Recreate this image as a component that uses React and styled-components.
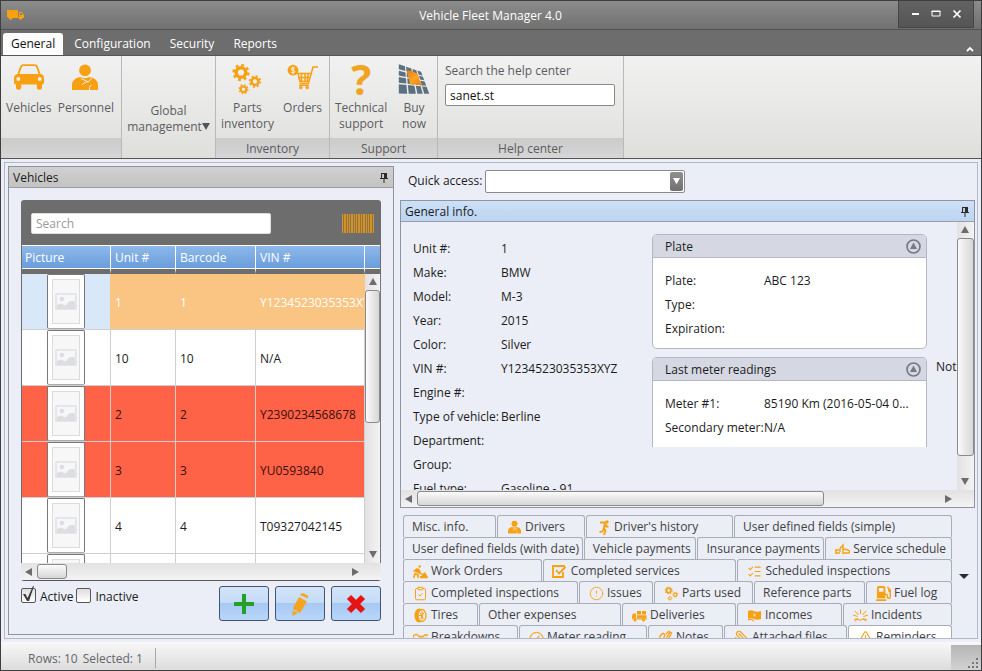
import React, { useState } from "react";
import styled, { createGlobalStyle, css } from "styled-components";
import {
  CircleAlert,
  ClipboardCheck,
  Gauge,
  ListChecks,
  Paperclip,
  TriangleAlert,
} from "lucide-react";
import { FaGasPump } from "react-icons/fa";
import { FaPersonDigging } from "react-icons/fa6";

const orange = "#f7a112";

const vehicles = [
  { unit: "1", barcode: "1", vin: "Y1234523035353XYZ", state: "selected" },
  { unit: "10", barcode: "10", vin: "N/A" },
  { unit: "2", barcode: "2", vin: "Y2390234568678", state: "alert" },
  { unit: "3", barcode: "3", vin: "YU0593840", state: "alert" },
  { unit: "4", barcode: "4", vin: "T09327042145" },
  { unit: "", barcode: "", vin: "" },
];

const generalInfo = [
  ["Unit #:", "1"],
  ["Make:", "BMW"],
  ["Model:", "M-3"],
  ["Year:", "2015"],
  ["Color:", "Silver"],
  ["VIN #:", "Y1234523035353XYZ"],
  ["Engine #:", ""],
  ["Type of vehicle:", "Berline"],
  ["Department:", ""],
  ["Group:", ""],
  ["Fuel type:", "Gasoline - 91"],
];

const plateInfo = [
  ["Plate:", "ABC 123"],
  ["Type:", ""],
  ["Expiration:", ""],
];

const meterInfo = [
  ["Meter #1:", "85190 Km (2016-05-04 0..."],
  ["Secondary meter:", "N/A"],
];

// size = share of the row that the tab takes
const tabRows = [
  [
    { label: "Misc. info.", size: 93 },
    { label: "Drivers", size: 88, icon: "person" },
    { label: "Driver's history", size: 147, icon: "runner" },
    { label: "User defined fields (simple)", size: 218 },
  ],
  [
    { label: "User defined fields (with date)", size: 180 },
    { label: "Vehicle payments", size: 113 },
    { label: "Insurance payments", size: 127 },
    { label: "Service schedule", size: 127, icon: "service" },
  ],
  [
    { label: "Work Orders", size: 139, icon: "digging" },
    { label: "Completed services", size: 194, icon: "checkbox" },
    { label: "Scheduled inspections", size: 215, icon: "list" },
  ],
  [
    { label: "Completed inspections", size: 175, icon: "clipboard" },
    { label: "Issues", size: 74, icon: "alert" },
    { label: "Parts used", size: 99, icon: "gears" },
    { label: "Reference parts", size: 111 },
    { label: "Fuel log", size: 86, icon: "fuel" },
  ],
  [
    { label: "Tires", size: 75, icon: "tire" },
    { label: "Other expenses", size: 142 },
    { label: "Deliveries", size: 114, icon: "delivery" },
    { label: "Incomes", size: 105, icon: "income" },
    { label: "Incidents", size: 109, icon: "burst" },
  ],
  [
    { label: "Breakdowns", size: 115, icon: "wrench" },
    { label: "Meter reading", size: 128, icon: "gauge" },
    { label: "Notes", size: 75, icon: "note" },
    { label: "Attached files", size: 123, icon: "clip" },
    { label: "Reminders", size: 104, icon: "warning" },
  ],
];

/* ---------- icons ---------- */

const TruckIcon = () => (
  <svg width="17" height="12" viewBox="0 0 17 12" fill={orange} aria-hidden="true">
    <path d="M0 1h11v7H0z" />
    <path d="M12 3h3l2 3v3h-5z" />
    <path d="M1 8h15v1H1z" />
    <circle cx="3.6" cy="9.3" r="1.5" />
    <circle cx="13.6" cy="9.3" r="1.5" />
    <path d="M13 4h1.5l1 2H13z" fill="#7b7b7b" />
  </svg>
);

const CarIcon = () => (
  <svg width="32" height="32" viewBox="0 0 32 32" aria-hidden="true">
    <path
      d="M5 12 8 3.7Q8.7 2.100 10.500 2.100H21.500Q23.300 2.100 24 3.700L27 12"
      fill="none"
      stroke={orange}
      strokeWidth="1.800"
    />
    <path
      d="M4.500 11h23q3.500.6 3.500 4v4.800q0 1.700-1.600 1.700H29v3.200q0 2-2.300 2h-.6q-2.300 0-2.300-2v-3.200H8.200v3.200q0 2-2.300 2h-.6q-2.300 0-2.300-2v-3.200h-.4Q1 21.500 1 19.800V15q0-3.400 3.500-4z"
      fill={orange}
    />
    <circle cx="5.300" cy="16" r="1.900" fill="#ececec" />
    <circle cx="26.700" cy="16" r="1.900" fill="#ececec" />
  </svg>
);

const PersonShape = ({ line = "#ececec" }) => (
  <>
    <circle cx="15" cy="7.400" r="5.900" fill={orange} />
    <path d="M2 27v-5.500q.5-6 8-7.500l5 1.200 5-1.200q7.500 1.500 8 7.500V27z" fill={orange} />
    <path
      d="M11 15.500 18.500 19M21.500 14.800q-1.500 4.500-6.500 4.500l-3 2.500M19.500 27v-2.500q0-2 2-2"
      fill="none"
      stroke={line}
      strokeWidth="1"
    />
  </>
);

const PersonIcon = () => (
  <svg width="32" height="32" viewBox="0 0 32 32" aria-hidden="true">
    <PersonShape />
  </svg>
);

const Gear = ({ x, y, r }) => {
  const tooth = (2 * Math.PI * r * 0.86) / 16;
  return (
    <g fill="none" stroke={orange}>
      <circle cx={x} cy={y} r={r * 0.56} strokeWidth={r * 0.4} />
      <circle cx={x} cy={y} r={r * 0.86} strokeWidth={r * 0.28} strokeDasharray={tooth} />
    </g>
  );
};

const GearsShape = () => (
  <>
    <Gear x={10} y={9.5} r={8.6} />
    <Gear x={24} y={18.5} r={6.2} />
    <Gear x={12.5} y={26.2} r={5} />
  </>
);

const GearsIcon = () => (
  <svg width="32" height="32" viewBox="0 0 32 32" aria-hidden="true">
    <GearsShape />
  </svg>
);

const CartIcon = () => (
  <svg width="32" height="32" viewBox="0 0 32 32" fill="none" stroke={orange} aria-hidden="true">
    <circle cx="6" cy="7.200" r="5.400" fill={orange} stroke="none" />
    <path
      d="M7.900 5.300Q4.200 4 4.200 5.900q0 1.200 2 1.400 2 .3 1.700 1.700-.8 1.500-3.900.2M6 3.300v8"
      stroke="#efefef"
      strokeWidth="1"
    />
    <path d="M31 4h-5l-4.600 16.500" strokeWidth="1.500" />
    <path
      d="M10 10.500h13.800M11 14.500h11.500M12 18.500h9.500M11 10.500l2 8M14.500 10v9M18 10v9M21.300 10l-1 9"
      strokeWidth="1.500"
    />
    <path d="M22 20.700H12.500" strokeWidth="1.600" />
    <path d="M12 22.500h10" strokeWidth="1.200" />
    <circle cx="13.800" cy="24.600" r="1.700" fill={orange} stroke="none" />
    <circle cx="20.200" cy="24.600" r="1.700" fill={orange} stroke="none" />
  </svg>
);

const SolarIcon = () => {
  const at = (u, v) => {
    const left = [0.8, 1.2 + v * 30];
    const right = [23.5 + v * 8.5, 9 + v * 22.2];
    return [
      left[0] + (right[0] - left[0]) * u,
      left[1] + (right[1] - left[1]) * u,
    ].join(",");
  };
  const cols = [0, 0.32, 0.6, 0.82, 1.03];
  const rows = [0, 0.22, 0.43, 0.67, 1.03];
  const cells = [];
  for (let c = 0; c < 4; c++) {
    for (let r = 0; r < 4; r++) {
      const [u1, u2] = [cols[c], cols[c + 1] - 0.05];
      const [v1, v2] = [rows[r], rows[r + 1] - 0.05];
      cells.push([at(u1, v1), at(u2, v1), at(u2, v2), at(u1, v2)].join(" "));
    }
  }
  return (
    <svg width="32" height="32" viewBox="0 0 32 32" aria-hidden="true">
      <defs>
        <linearGradient id="glow" x1="0" y1="0" x2="1" y2="1">
          <stop offset="0" stopColor="#e8791a" />
          <stop offset="0.5" stopColor="#fba51d" />
          <stop offset="1" stopColor="#e57b22" />
        </linearGradient>
      </defs>
      {cells.map((points) => (
        <polygon key={points} points={points} fill="#5b717f" />
      ))}
      <path d="m8.500 7.500 5.500.5 6 3 1.500 6L25 23l-6-1.500h-7l-.8-4.500z" fill="url(#glow)" />
    </svg>
  );
};

const bars = [
  [0, 1], [2, 2], [5, 1], [7, 1], [9, 2], [12, 1], [14, 1], [16, 2],
  [19, 1], [21, 2], [24, 1], [26, 1], [28, 2], [31, 1],
];

const BarcodeIcon = () => (
  <svg width="32" height="19" viewBox="0 0 32 19" aria-hidden="true">
    <rect width="32" height="19" fill="#94733e" />
    {bars.map(([x, w]) => (
      <rect key={x} x={x} width={w} height="19" fill="#cf922d" />
    ))}
  </svg>
);

const PinIcon = () => (
  <svg width="8" height="10" viewBox="0 0 8 10" aria-hidden="true">
    <path d="M1 0h6v5h1v1H0V5h1zM3.500 6h1v4h-1z" fill="#2b2b2f" />
    <path d="M2 1h2v4H2z" fill="#c4cad2" />
  </svg>
);

const PictureIcon = () => (
  <svg width="22" height="17" viewBox="0 0 22 17" aria-hidden="true">
    <rect x="1" y="1" width="20" height="15" fill="#f6f7f8" stroke="#dfe1e3" strokeWidth="1.500" />
    <circle cx="7" cy="6" r="2.300" fill="#dcdee1" />
    <path d="M2 12q4-3 7 0 2 1 4-2.500 2-3 7-1V16H2z" fill="#dcdee1" />
  </svg>
);

const PlusIcon = () => (
  <svg width="20" height="20" viewBox="0 0 20 20" aria-hidden="true">
    <path d="M8 0h4v8h8v4h-8v8H8v-8H0V8h8z" fill="#23a127" />
  </svg>
);

const PencilIcon = () => (
  <svg width="20" height="24" viewBox="0 0 20 24" fill="#f5a51d" aria-hidden="true">
    <path d="M10 3q1-2.500 4-1.500l3 1.700q2 1.300 1 3.300z" />
    <path d="m9 5 8 4.500-7 11.500-2.500-1-1-1.500-2.500-.5-1-2z" />
    <path d="m2.300 17.500 1.200 2 2.500.3 1.500 1.700L2.500 24z" />
  </svg>
);

const CrossIcon = () => (
  <svg width="20" height="20" viewBox="0 0 20 20" aria-hidden="true">
    <path d="m3 3 14 14M17 3 3 17" stroke="#e81313" strokeWidth="6" />
  </svg>
);

const TickIcon = () => (
  <Tick width="15" height="17" viewBox="0 0 15 17" aria-hidden="true">
    <path d="M2 8h2.500l2 4L12 0h1L8 15H6z" fill="#3d3d3d" />
  </Tick>
);

const stroke = { fill: "none", stroke: orange, strokeWidth: 1.3 };

const smallIcons = {
  person: (
    <svg viewBox="0 0 30 30">
      <PersonShape line="#ebeef5" />
    </svg>
  ),
  runner: (
    <svg viewBox="0 0 15 15">
      <circle cx="11" cy="2" r="1.700" fill={orange} />
      <path
        d="M4 2.500h5l-1 6 1.500 2-1.500 4.500M8 8l-1.500 3.500L3.500 12M9.500 4.500l1 2h2"
        {...stroke}
        strokeWidth="1.900"
      />
    </svg>
  ),
  service: (
    <svg viewBox="0 0 15 15">
      <path
        d="M0 8h4M0 11H5M8 11h6.500M5 10V6.500L8 3v9M8 7q4 0 6.500 2v2M1 8v3"
        {...stroke}
        strokeWidth="1.400"
      />
    </svg>
  ),
  digging: <FaPersonDigging color={orange} />,
  checkbox: (
    <svg viewBox="0 0 15 15">
      <path d="M11 8v5H1V2h12M4 6l3 3.500L13.500 3" {...stroke} strokeWidth="1.800" />
    </svg>
  ),
  list: <ListChecks color={orange} strokeWidth={1.7} />,
  clipboard: <ClipboardCheck color={orange} strokeWidth={1.6} />,
  alert: <CircleAlert color={orange} strokeWidth={1.4} />,
  gears: (
    <svg viewBox="0 0 32 32">
      <GearsShape />
    </svg>
  ),
  fuel: <FaGasPump color={orange} />,
  tire: (
    <svg viewBox="0 0 15 15">
      <ellipse cx="6" cy="7.500" rx="4.500" ry="7" fill={orange} />
      <ellipse cx="9" cy="7.500" rx="4" ry="6" fill="#ebeef5" stroke={orange} strokeWidth="1.300" />
      <path d="M9 3v9M6 7.500h3M7 4.500l3.500 6M11 4.500l-3.500 6" stroke={orange} />
    </svg>
  ),
  delivery: (
    <svg viewBox="0 0 15 15">
      <path
        d="M5 3h4v3.500H5zM10 3h4v3.500h-4zM5 7.200h9.500v3H5zM1 5.500h3v4.700H0V8zM0 10.500h15v1H0z"
        fill={orange}
      />
      <circle cx="3" cy="12" r="1.500" fill={orange} />
      <circle cx="11.500" cy="12" r="1.500" fill={orange} />
    </svg>
  ),
  income: (
    <svg viewBox="0 0 15 15">
      <path d="M1 3q3-1.500 6 0t7 0v8q-4 1.500-7 0t-6 0z" fill={orange} />
      <path d="M1 12q3-1.500 6 1" {...stroke} />
      <circle cx="7.500" cy="7" r="1.500" fill="#fbd58f" />
    </svg>
  ),
  burst: (
    <svg viewBox="0 0 15 15">
      <path
        d="M7.500 6V1.500M5.500 7 2 3M9.500 7 13 3M4.500 8.500 0 7M10.500 8.500 15 7M1 12q2-2 4-.5t4 0 5 .5M5 10l-3 3.500M10 10l3 3.500"
        {...stroke}
        strokeWidth="1"
      />
    </svg>
  ),
  wrench: (
    <svg viewBox="0 0 15 15">
      <path d="M0 7q1-3 4-2.500L6 6.500h4l2-1.500h3M0 7.500l2 2h3L6.500 8.500H15" {...stroke} />
    </svg>
  ),
  gauge: <Gauge color={orange} strokeWidth={1.7} />,
  note: (
    <svg viewBox="0 0 15 15">
      <path d="M2 13V6l3-3M5 3l2 2-3 7M8 9l4-7 1.500 1L10 10M8 4l3-3" {...stroke} />
    </svg>
  ),
  clip: <FlippedClip color={orange} strokeWidth={1.8} />,
  warning: <TriangleAlert color={orange} strokeWidth={1.8} />,
};

function FlippedClip(props) {
  return (
    <Flip>
      <Paperclip {...props} />
    </Flip>
  );
}

const arrowPaths = {
  up: "M4 0 8 7H0z",
  down: "M0 0h8L4 7z",
  left: "M7 0v8L0 4z",
  right: "M0 0v8l7-4z",
};

const Arrow = ({ dir, color = "#6b6b70" }) => (
  <svg width="8" height="8" viewBox="0 0 8 8" aria-hidden="true">
    <path d={arrowPaths[dir]} fill={color} />
  </svg>
);

/* ---------- components ---------- */

const VerticalScroll = ({ thumb, after }) => (
  <VTrack>
    <ScrollButton aria-label="Scroll up">
      <Arrow dir="up" />
    </ScrollButton>
    <VThumb $grow={thumb} />
    <Space $grow={after} />
    <ScrollButton aria-label="Scroll down">
      <Arrow dir="down" />
    </ScrollButton>
  </VTrack>
);

const HorizontalScroll = ({ thumb, after }) => (
  <HTrack>
    <ScrollButton aria-label="Scroll left">
      <Arrow dir="left" />
    </ScrollButton>
    <HThumb $grow={thumb} />
    <Space $grow={after} />
    <ScrollButton aria-label="Scroll right">
      <Arrow dir="right" />
    </ScrollButton>
  </HTrack>
);

const Details = ({ items, labelWidth }) => (
  <DetailList $label={labelWidth}>
    {items.map(([label, value]) => (
      <React.Fragment key={label}>
        <dt>{label}</dt>
        <dd>{value}</dd>
      </React.Fragment>
    ))}
  </DetailList>
);

const RibbonItem = ({ icon, children }) => (
  <RibbonButton>
    <IconBox>{icon}</IconBox>
    <span>{children}</span>
  </RibbonButton>
);

const InfoCard = ({ title, items, open }) => (
  <Card $open={open}>
    <CardHeader>
      {title}
      <PlainButton aria-label={`Collapse ${title}`}>
        <svg width="15" height="15" viewBox="0 0 15 15">
          <circle cx="7.500" cy="7.500" r="6.500" fill="none" stroke="#777985" strokeWidth="1.700" />
          <path d="M7.500 3.500 11 10H4z" fill="#777985" />
        </svg>
      </PlainButton>
    </CardHeader>
    <CardBody>
      <Details items={items} labelWidth={99} />
    </CardBody>
  </Card>
);

const VehiclesPanel = () => {
  const [active, setActive] = useState(true);
  const [inactive, setInactive] = useState(false);

  return (
    <Panel>
      <PanelHeader>
        Vehicles
        <PlainButton aria-label="Pin vehicles">
          <PinIcon />
        </PlainButton>
      </PanelHeader>
      <PanelContent>
        <SearchBar>
          <SearchInput placeholder="Search" aria-label="Search vehicles" />
          <PlainButton aria-label="Scan barcode">
            <BarcodeIcon />
          </PlainButton>
        </SearchBar>
        <GridBox>
          <TableClip>
            <Table>
              <colgroup>
                <Col $width={89} />
                <Col $width={65} />
                <Col $width={80} />
                <col />
                <Col $width={15} />
              </colgroup>
              <thead>
                <tr>
                  <Th>Picture</Th>
                  <Th>Unit #</Th>
                  <Th>Barcode</Th>
                  <Th>VIN #</Th>
                  <Th aria-hidden="true" />
                </tr>
              </thead>
              <tbody>
                {vehicles.map((v, i) => (
                  <Row key={i} $state={v.state}>
                    <td>
                      <Thumbnail>
                        <div>
                          <PictureIcon />
                        </div>
                      </Thumbnail>
                    </td>
                    <td>{v.unit}</td>
                    <td>{v.barcode}</td>
                    <td>{v.vin}</td>
                    <td />
                  </Row>
                ))}
              </tbody>
            </Table>
          </TableClip>
          <VerticalScroll thumb={132} after={124} />
          <HorizontalScroll thumb={28} after={284} />
        </GridBox>
        <PanelFooter>
          <Check>
            <CheckBox>
              <input type="checkbox" checked={active} onChange={() => setActive(!active)} />
              {active && <TickIcon />}
            </CheckBox>
            Active
          </Check>
          <Check>
            <CheckBox>
              <input type="checkbox" checked={inactive} onChange={() => setInactive(!inactive)} />
              {inactive && <TickIcon />}
            </CheckBox>
            Inactive
          </Check>
          <Actions>
            <ActionButton aria-label="Add vehicle">
              <PlusIcon />
            </ActionButton>
            <ActionButton aria-label="Edit vehicle">
              <PencilIcon />
            </ActionButton>
            <ActionButton aria-label="Delete vehicle">
              <CrossIcon />
            </ActionButton>
          </Actions>
        </PanelFooter>
      </PanelContent>
    </Panel>
  );
};

const App = () => {
  const [help, setHelp] = useState("sanet.st");
  const [tab, setTab] = useState("Reminders");

  return (
    <>
      <GlobalStyle />
      <Window>
        <TitleBar>
          <TruckIcon />
          <Title>Vehicle Fleet Manager 4.0</Title>
          <WindowButtons>
            <PlainButton aria-label="Minimize">
              <svg width="10" height="10" viewBox="0 0 10 10">
                <path d="M2 4h7v2H2z" fill="#fff" />
              </svg>
            </PlainButton>
            <PlainButton aria-label="Maximize">
              <svg width="10" height="10" viewBox="0 0 10 10">
                <path d="M1 2h8v5H1zM.5 2.500h9" fill="none" stroke="#fff" />
              </svg>
            </PlainButton>
            <PlainButton aria-label="Close">
              <svg width="10" height="10" viewBox="0 0 10 10">
                <path d="m1.500 1.500 7 7m0-7-7 7" stroke="#fff" strokeWidth="1.700" />
              </svg>
            </PlainButton>
          </WindowButtons>
        </TitleBar>

        <MenuBar>
          <MenuTab $active>General</MenuTab>
          <MenuTab>Configuration</MenuTab>
          <MenuTab>Security</MenuTab>
          <MenuTab>Reports</MenuTab>
          <RibbonToggle aria-label="Collapse ribbon">
            <svg width="8" height="6" viewBox="0 0 8 6">
              <path d="m1 5 3-3 3 3" fill="none" stroke="#fff" strokeWidth="1.800" />
            </svg>
          </RibbonToggle>
        </MenuBar>

        <Ribbon>
          <Group $width={121}>
            <GroupItems>
              <RibbonItem icon={<CarIcon />}>Vehicles</RibbonItem>
              <RibbonItem icon={<PersonIcon />}>Personnel</RibbonItem>
            </GroupItems>
            <GroupLabel />
          </Group>
          <Group $width={94}>
            <GlobalButton>
              Global
              <br />
              management
              <Arrow dir="down" color="#555" />
            </GlobalButton>
          </Group>
          <Group $width={114}>
            <GroupItems>
              <RibbonItem icon={<GearsIcon />}>
                Parts
                <br />
                inventory
              </RibbonItem>
              <RibbonItem icon={<CartIcon />}>Orders</RibbonItem>
            </GroupItems>
            <GroupLabel>Inventory</GroupLabel>
          </Group>
          <Group $width={108}>
            <GroupItems>
              <RibbonItem icon={<QuestionMark>?</QuestionMark>}>
                Technical
                <br />
                support
              </RibbonItem>
              <RibbonItem icon={<SolarIcon />}>
                Buy
                <br />
                now
              </RibbonItem>
            </GroupItems>
            <GroupLabel>Support</GroupLabel>
          </Group>
          <Group $width={186}>
            <HelpSearch>
              <label htmlFor="help">Search the help center</label>
              <HelpInput id="help" value={help} onChange={(e) => setHelp(e.target.value)} />
            </HelpSearch>
            <GroupLabel>Help center</GroupLabel>
          </Group>
        </Ribbon>

        <Body>
          <Workspace>
            <VehiclesPanel />
            <Main>
              <QuickAccess>
                <label htmlFor="quick">Quick access:</label>
                <SelectBox>
                  <select id="quick" />
                  <SelectArrow>
                    <Arrow dir="down" color="#fff" />
                  </SelectArrow>
                </SelectBox>
              </QuickAccess>
              <InfoPanel>
                <PanelHeader $blue>
                  General info.
                  <PlainButton aria-label="Pin general info">
                    <PinIcon />
                  </PlainButton>
                </PanelHeader>
                <InfoGrid>
                  <InfoClip>
                    <InfoContent>
                      <Details items={generalInfo} labelWidth={88} />
                      <Cards>
                        <InfoCard title="Plate" items={plateInfo} />
                        <InfoCard title="Last meter readings" items={meterInfo} open />
                      </Cards>
                      <Notes>Not</Notes>
                    </InfoContent>
                  </InfoClip>
                  <VerticalScroll thumb={216} after={18} />
                  <HorizontalScroll thumb={405} after={117} />
                </InfoGrid>
              </InfoPanel>
              <TabArea>
                <TabRows>
                  {tabRows.map((row, i) => (
                    <TabRow key={i} $sizes={row.map((t) => t.size)}>
                      {row.map((t) => (
                        <Tab
                          key={t.label}
                          $active={t.label === tab}
                          onClick={() => setTab(t.label)}
                        >
                          {t.icon && <TabIcon>{smallIcons[t.icon]}</TabIcon>}
                          {t.label}
                        </Tab>
                      ))}
                    </TabRow>
                  ))}
                </TabRows>
                <MoreButton aria-label="More tabs">
                  <svg width="10" height="5" viewBox="0 0 10 5">
                    <path d="M0 0h10L5 5z" fill="#2b2b2f" />
                  </svg>
                </MoreButton>
              </TabArea>
            </Main>
          </Workspace>
        </Body>

        <StatusBar>
          <StatusText>
            <span>Rows: 10</span>
            <span>Selected: 1</span>
          </StatusText>
          <Grip>
            <svg width="11" height="11" viewBox="0 0 11 11" fill="#77777b">
              <path d="M8 0h2v2H8zM4 4h2v2H4zM8 4h2v2H8zM0 8h2v2H0zM4 8h2v2H4zM8 8h2v2H8z" />
            </svg>
          </Grip>
        </StatusBar>
      </Window>
    </>
  );
};

/* ---------- styles ---------- */

const GlobalStyle = createGlobalStyle`
  * {
    box-sizing: border-box;
  }
  body {
    margin: 0;
    color: #1c1c20;
    font: 12px/16px "Open Sans", "Noto Sans", sans-serif;
  }
  button, input, select {
    font: inherit;
    color: inherit;
  }
  button {
    border: none;
    padding: 0;
    background: none;
  }
  svg {
    flex: none;
    display: block;
  }
`;

const Window = styled.div`
  display: flex;
  flex-direction: column;
  height: 100vh;
  border: 1px solid #403d40;
  background: #ebeef6;
  overflow: hidden;
`;

const PlainButton = styled.button`
  display: flex;
  align-items: center;
`;

const Tick = styled.svg`
  grid-area: 1 / 1;
  align-self: end;
  pointer-events: none;
`;

const Flip = styled.span`
  transform: scaleX(-1);
`;

const TitleBar = styled.header`
  display: grid;
  grid-template-columns: 1fr auto 1fr;
  align-items: center;
  flex: none;
  height: 29px;
  padding: 0 7px 0 6px;
  border-bottom: 1px solid #515151;
  background: linear-gradient(#8c8c8c, #707070);
`;

const Title = styled.h1`
  margin: 0;
  padding-top: 2px;
  font-size: 12px;
  font-weight: 400;
  color: #fff;
`;

const WindowButtons = styled.div`
  display: flex;
  justify-content: space-evenly;
  align-items: center;
  justify-self: end;
  align-self: start;
  width: 76px;
  height: 27px;
  border: 1px solid #444;
  border-top: none;
  background: linear-gradient(#626262, #555);
`;

const MenuBar = styled.nav`
  display: flex;
  align-items: flex-end;
  flex: none;
  gap: 3px;
  height: 25px;
  padding-left: 2px;
  background: #6d6d6d;
`;

const MenuTab = styled.button`
  height: 22px;
  padding: 0 8px;
  border-radius: 3px 3px 0 0;
  color: #fff;
  ${(p) =>
    p.$active &&
    css`
      background: #fcfcfc;
      color: #111;
    `}
`;

const RibbonToggle = styled(PlainButton)`
  margin: 0 7px 3px auto;
`;

const Ribbon = styled.div`
  display: flex;
  flex: none;
  height: 104px;
  border-top: 1px solid #555;
  border-bottom: 1px solid #555;
  background: linear-gradient(#f1f1f1, #dfdfdc);
  color: #5c5c60;
`;

const Group = styled.section`
  display: flex;
  flex-direction: column;
  justify-content: space-between;
  width: ${(p) => p.$width}px;
  border-right: 1px solid #b9b9b9;
`;

const GroupItems = styled.div`
  display: flex;
  justify-content: space-between;
  padding: 0 7px 0 5px;
`;

const RibbonButton = styled.button`
  display: flex;
  flex-direction: column;
  align-items: center;
  padding-top: 7px;
`;

const IconBox = styled.span`
  height: 37px;
`;

const QuestionMark = styled.span`
  display: block;
  height: 34px;
  overflow: hidden;
  font-size: 42px;
  font-weight: 700;
  line-height: 32px;
  color: #f0a422;
`;

const GroupLabel = styled.div`
  height: 20px;
  line-height: 22px;
  text-align: center;
  background: linear-gradient(#cbcbcb, #d6d6d6);
`;

const GlobalButton = styled.button`
  padding-top: 47px;
  svg {
    display: inline-block;
  }
`;

const HelpSearch = styled.div`
  display: flex;
  flex-direction: column;
  gap: 5px;
  padding: 7px 8px 0 7px;
`;

const HelpInput = styled.input`
  height: 22px;
  padding: 0 4px;
  border: 1px solid #8a8a8a;
  border-radius: 2px;
  background: #fff;
  color: #111;
`;

const Body = styled.div`
  display: flex;
  flex: 1;
  min-height: 0;
  padding: 3px;
`;

const Workspace = styled.div`
  display: flex;
  flex: 1;
  gap: 6px;
  min-width: 0;
  padding: 3px 2px 0 3px;
  border: 1px solid #b3b8c6;
`;

const Panel = styled.section`
  display: flex;
  flex-direction: column;
  width: 386px;
  min-height: 0;
  margin-bottom: 3px;
  border: 1px solid #8f93a0;
`;

const PanelHeader = styled.h2`
  display: flex;
  justify-content: space-between;
  align-items: center;
  flex: none;
  height: 21px;
  margin: 0;
  padding: 2px 5px 0 4px;
  font-size: 12px;
  font-weight: 400;
  border-bottom: 1px solid #9a9da8;
  background: ${(p) =>
    p.$blue ? "linear-gradient(#cde0f6, #bbd5f2)" : "linear-gradient(#cfd0cf, #c3c4c2)"};
`;

const PanelContent = styled.div`
  display: flex;
  flex-direction: column;
  flex: 1;
  min-height: 0;
  padding: 12px;
`;

const SearchBar = styled.div`
  display: flex;
  justify-content: space-between;
  align-items: center;
  flex: none;
  height: 45px;
  padding: 2px 7px 0 10px;
  border-radius: 3px 3px 0 0;
  background: #6d6d6d;
`;

const SearchInput = styled.input`
  width: 240px;
  height: 21px;
  padding: 0 4px;
  border: 1px solid #ddd;
  border-radius: 2px;
  &::placeholder {
    color: #9a9a9a;
    opacity: 1;
  }
`;

const ScrollButton = styled.button`
  display: flex;
  justify-content: center;
  align-items: center;
  flex: none;
  width: 16px;
  height: 16px;
`;

const VTrack = styled.div`
  grid-area: 2 / 2;
  display: flex;
  flex-direction: column;
  min-height: 0;
  border-right: 1px solid #77777b;
  background: linear-gradient(90deg, #e2e2e2, #f3f3f3);
`;

const HTrack = styled.div`
  grid-area: 3 / 1 / 4 / 3;
  display: flex;
  align-items: center;
  padding-right: 17px;
  background: linear-gradient(#e2e2e2, #f3f3f3);
`;

const Space = styled.div`
  flex: ${(p) => p.$grow} 1 0;
`;

const VThumb = styled.div`
  flex: ${(p) => p.$grow} 1 0;
  border: 1px solid #8a8a8e;
  border-radius: 3px;
  background: linear-gradient(90deg, #fbfbfb, #d6d6d6);
`;

const HThumb = styled.div`
  flex: ${(p) => p.$grow} 1 0;
  height: 15px;
  border: 1px solid #8a8a8e;
  border-radius: 3px;
  background: linear-gradient(#fbfbfb, #d6d6d6);
`;

const GridBox = styled.div`
  display: grid;
  grid-template: 29px minmax(0, 1fr) 17px / minmax(0, 1fr) 16px;
  flex: 1;
  min-height: 0;
  border-bottom: 1px solid #55555a;
  border-radius: 0 0 3px 3px;
`;

const TableClip = styled.div`
  grid-area: 1 / 1 / 3 / 3;
  overflow: hidden;
  background: #fff;
  border-left: 1px solid #6d6d6d;
  border-right: 1px solid #6d6d6d;
`;

const Table = styled.table`
  width: 100%;
  table-layout: fixed;
  border-collapse: separate;
  border-spacing: 0;
`;

const Col = styled.col`
  width: ${(p) => p.$width}px;
`;

const Th = styled.th`
  height: 29px;
  padding: 1px 4px 0;
  border-top: 1px solid #fff;
  border-right: 1px solid #fff;
  border-bottom: 5px solid #6d6d6d;
  background: linear-gradient(#8fb8ea, #679cdb);
  box-shadow: inset 0 -1px #fff;
  color: #fff;
  font-weight: 400;
  text-align: left;
  &:first-child {
    padding-left: 3px;
  }
  &:last-child {
    border-right: none;
  }
`;

const rowColors = {
  selected: css`
    background: #fac583;
    color: #fff;
    td:first-child {
      background: #d9e8f8;
    }
    td {
      border-right-color: #fac583;
    }
  `,
  alert: css`
    background: #ff6347;
    color: #3a0d0d;
  `,
};

const Row = styled.tr`
  td {
    height: 56px;
    padding: 2px 4px 0;
    border-right: 1px solid #cfcfcf;
    border-bottom: 1px solid #cfcfcf;
    white-space: nowrap;
    overflow: hidden;
  }
  td:first-child {
    padding: 0;
  }
  td:nth-child(4) {
    padding-right: 0;
  }
  ${(p) => rowColors[p.$state]}
`;

const Thumbnail = styled.div`
  width: 38px;
  height: 55px;
  margin: 0 auto;
  padding: 4px;
  border: 1px solid #77777b;
  border-bottom-color: #aaaaae;
  border-radius: 2px;
  background: #fff;
  div {
    display: flex;
    justify-content: center;
    align-items: center;
    height: 100%;
    border: 1px solid #dcdcdc;
    background: #f7f7f8;
  }
`;

const PanelFooter = styled.div`
  display: flex;
  align-items: flex-start;
  flex: none;
  gap: 3px;
  height: 41px;
  padding-top: 5px;
`;

const Check = styled.label`
  display: flex;
  align-items: flex-end;
  gap: 4px;
  height: 19px;
`;

const CheckBox = styled.span`
  display: grid;
  grid-template-rows: 15px;
  padding-bottom: 2px;
  input {
    grid-area: 1 / 1;
    appearance: none;
    width: 15px;
    height: 15px;
    margin: 0;
    border: 1px solid #55555a;
    border-radius: 2px;
    background: linear-gradient(#dedede, #fff);
  }
`;

const Actions = styled.div`
  display: flex;
  gap: 6px;
  margin-left: auto;
`;

const ActionButton = styled.button`
  display: flex;
  justify-content: center;
  align-items: center;
  width: 50px;
  height: 35px;
  border: 1px solid #44546e;
  border-radius: 3px;
  background: linear-gradient(#d3e4f8, #c3daf6 50%, #a6c8f3 50%, #b9d7fb);
`;

const Main = styled.main`
  display: flex;
  flex-direction: column;
  flex: 1;
  min-width: 0;
`;

const QuickAccess = styled.div`
  display: flex;
  align-items: center;
  gap: 3px;
  flex: none;
  height: 34px;
  padding: 0 8px 4px;
`;

const SelectBox = styled.div`
  display: grid;
  align-items: center;
  select {
    grid-area: 1 / 1;
    appearance: none;
    width: 200px;
    height: 23px;
    border: 1px solid #8a8a8e;
    border-radius: 2px;
    background: #fff;
  }
`;

const SelectArrow = styled.span`
  grid-area: 1 / 1;
  justify-self: end;
  display: flex;
  justify-content: center;
  align-items: center;
  width: 13px;
  height: 19px;
  margin-right: 2px;
  border-radius: 2px;
  background: linear-gradient(#8f8f8f, #707070);
  pointer-events: none;
  svg {
    width: 7px;
    height: 7px;
  }
`;

const InfoPanel = styled.section`
  display: flex;
  flex-direction: column;
  flex: 1;
  min-height: 0;
  border: 1px solid #8f93a0;
`;

const InfoGrid = styled.div`
  display: grid;
  grid-template: minmax(0, 1fr) 17px / minmax(0, 1fr) 17px;
  flex: 1;
  min-height: 0;
  ${VTrack} {
    grid-area: 1 / 2;
    border: none;
  }
  ${HTrack} {
    grid-area: 2 / 1 / 3 / 3;
  }
`;

const InfoClip = styled.div`
  overflow: hidden;
`;

const InfoContent = styled.div`
  display: grid;
  grid-template-columns: 239px minmax(0, 1fr) 21px;
  padding-left: 12px;
`;

const DetailList = styled.dl`
  display: grid;
  grid-template-columns: ${(p) => p.$label}px minmax(0, 1fr);
  grid-auto-rows: 24px;
  align-items: center;
  margin: 0;
  padding: 15px 0 11px;
  white-space: nowrap;
  dd {
    margin: 0;
  }
`;

const Cards = styled.div`
  display: flex;
  flex-direction: column;
  gap: 8px;
  padding: 12px 9px 0 0;
`;

const Card = styled.section`
  border: 1px solid #b5b8c4;
  border-radius: 5px;
  background: #fff;
  overflow: hidden;
  ${(p) =>
    p.$open &&
    css`
      border-bottom: none;
      border-radius: 5px 5px 0 0;
    `}
`;

const CardHeader = styled.h3`
  display: flex;
  justify-content: space-between;
  align-items: center;
  height: 23px;
  margin: 0;
  padding: 1px 5px 0 12px;
  font-size: 12px;
  font-weight: 400;
  border-bottom: 1px solid #b5b8c4;
  background: #d5d8e2;
`;

const CardBody = styled.div`
  padding-left: 12px;
  ${DetailList} {
    padding: 11px 0 7px;
  }
`;

const Notes = styled.div`
  align-self: center;
`;

const TabArea = styled.div`
  display: flex;
  flex: none;
  height: 130px;
  padding: 7px 0 0 3px;
`;

const TabRows = styled.div`
  flex: 1;
  min-width: 0;
  overflow: hidden;
`;

const TabRow = styled.div`
  display: grid;
  grid-template-columns: ${(p) => p.$sizes.map((s) => `minmax(0, ${s}fr)`).join(" ")};
  gap: 1px;
`;

const Tab = styled.button`
  display: flex;
  align-items: center;
  gap: 3px;
  height: 22px;
  padding: 1px 8px 0;
  border: 1px solid #a9adb9;
  border-bottom: none;
  border-radius: 3px 3px 0 0;
  background: ${(p) => (p.$active ? "#fff" : "#ebeef4")};
  color: #3f3f45;
  white-space: nowrap;
`;

const TabIcon = styled.span`
  display: flex;
  justify-content: center;
  flex: none;
  width: 16px;
  svg {
    width: 15px;
    height: 15px;
  }
`;

const MoreButton = styled(PlainButton)`
  justify-content: center;
  width: 23px;
`;

const StatusBar = styled.footer`
  display: flex;
  justify-content: space-between;
  flex: none;
  height: 28px;
  background: linear-gradient(#f8f8f8, #dcdcdc);
  color: #66666a;
`;

const StatusText = styled.div`
  display: flex;
  align-items: center;
  gap: 5px;
  height: 20px;
  margin-top: 6px;
  padding: 2px 12px 0 27px;
  border-right: 1px solid #a8a8ac;
`;

const Grip = styled.div`
  display: flex;
  justify-content: flex-end;
  align-items: flex-end;
  width: 30px;
  height: 25px;
  margin-top: 3px;
  padding: 0 2px 1px 0;
  background: linear-gradient(#b5b5b5, #d2d2d2);
`;

export default App;
